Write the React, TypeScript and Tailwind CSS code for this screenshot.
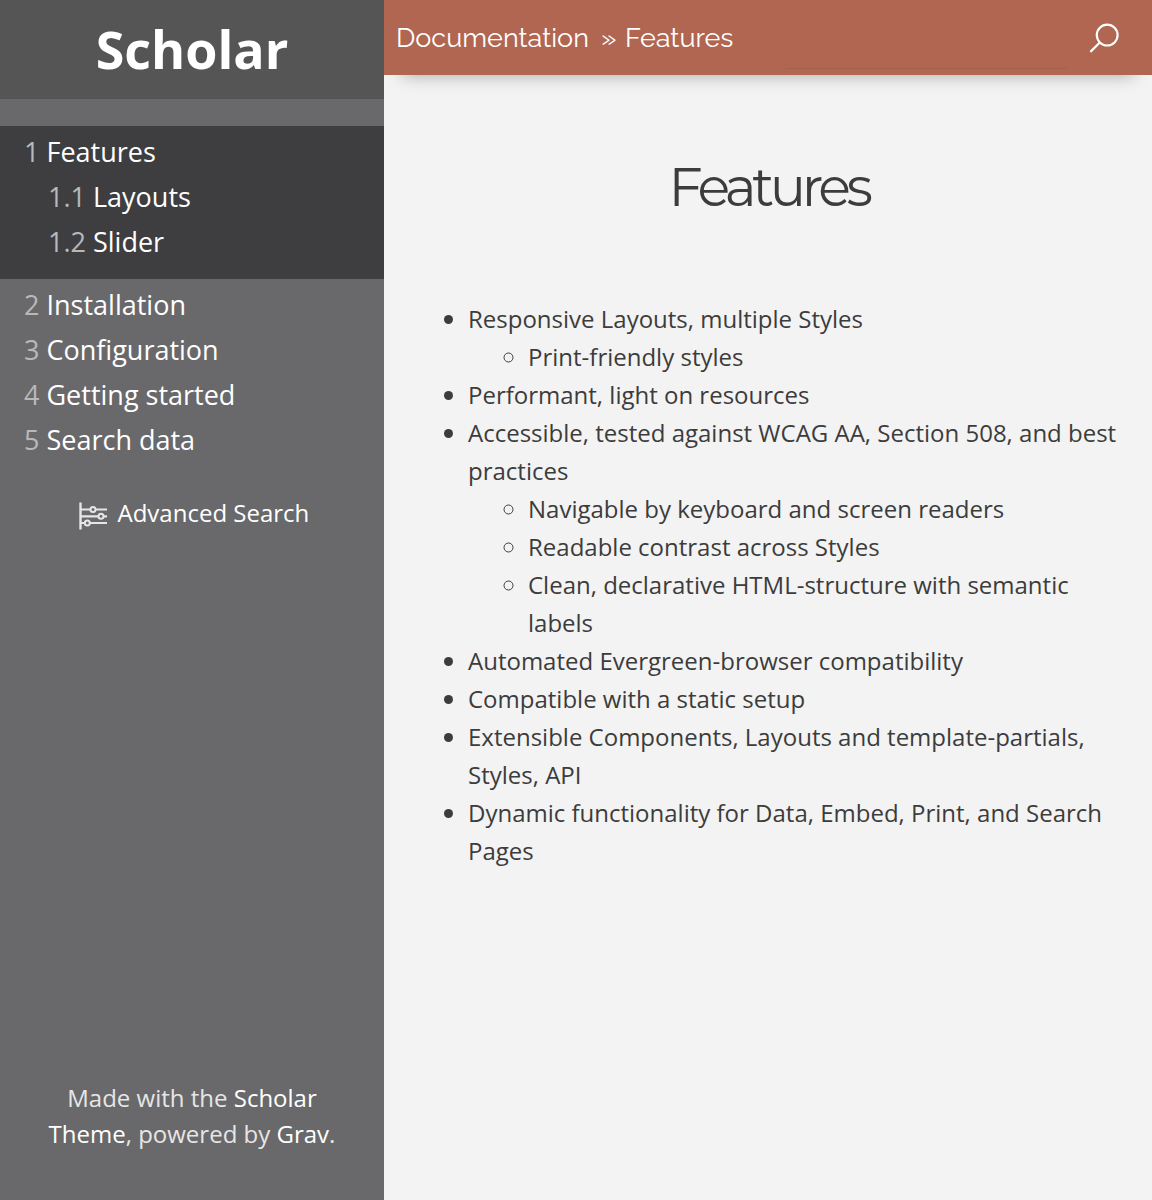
import React from "react";

const pages = [
  { n: "2", label: "Installation" },
  { n: "3", label: "Configuration" },
  { n: "4", label: "Getting started" },
  { n: "5", label: "Search data" },
];

function NavItem({ n, label, nested = false }: { n: string; label: string; nested?: boolean }) {
  return (
    <li className={nested ? "h-[45px] pl-12" : "h-[45px] pl-6"}>
      <a className="block whitespace-pre text-[27px] leading-[51px] text-white">
        <span className="text-[#b8b8b8]">{n}</span> {label}
      </a>
    </li>
  );
}

function FiltersIcon() {
  return (
    <svg className="h-7 w-7 shrink-0" viewBox="0 0 28 28" fill="none" stroke="#e6e6e6" strokeWidth="2">
      <path d="M1.5 0.5v27" strokeWidth="2.4" />
      <path d="M2 7.5h9.5M16.5 7.5h11.5M2 14.3h17.5M24.5 14.3h3.5M2 21h3.8M10.8 21h17.2" strokeWidth="2.2" />
      <circle cx="14" cy="7.5" r="2.5" />
      <circle cx="22" cy="14.3" r="2.5" />
      <circle cx="8.3" cy="21" r="2.5" />
    </svg>
  );
}

function SearchIcon() {
  return (
    <svg className="h-[30px] w-[30px]" viewBox="0 0 30 30" fill="none" stroke="#fff" strokeWidth="2.2">
      <circle cx="18.2" cy="12.1" r="10.4" />
      <path d="M10.8 19.5L1.4 28.9" />
    </svg>
  );
}

export default function App() {
  return (
    <div className="flex h-[1200px] w-[1152px] overflow-hidden bg-[#f3f3f3] font-['Open_Sans',sans-serif]">
      <aside className="flex w-96 shrink-0 flex-col bg-[#69696b]">
        <div className="h-[99px] bg-[#555555] text-center text-[52px] font-bold leading-[98px] text-white">
          Scholar
        </div>
        <nav className="mt-[27px]">
          <ul>
            <li className="h-[153px] bg-[#3e3e40]">
              <ul>
                <NavItem n="1" label="Features" />
                <NavItem n="1.1" label="Layouts" nested />
                <NavItem n="1.2" label="Slider" nested />
              </ul>
            </li>
            {pages.map((p) => (
              <NavItem key={p.n} n={p.n} label={p.label} />
            ))}
          </ul>
        </nav>
        <a className="mt-9 flex h-9 items-center pl-[79px] text-[24px] leading-9 text-white">
          <span className="mt-[5px]"><FiltersIcon /></span>
          <span className="ml-[10.5px]">Advanced Search</span>
        </a>
        <footer className="mb-12 mt-auto text-center text-[24px] leading-9 text-[#e6e6e6]">
          Made with the <span className="text-white">Scholar<br />Theme</span>, powered by{" "}
          <span className="text-white">Grav</span>.
        </footer>
      </aside>
      <main className="flex-1">
        <header className="flex h-[75px] items-center bg-[#b06651] pl-3 shadow-[0_18px_18px_-18px_rgba(0,0,0,0.32)]">
          <div className="mt-0.5 flex items-baseline font-['Raleway',sans-serif] text-[27px] text-white">
            <span>Documentation</span>
            <span className="ml-3">»</span>
            <span className="ml-[8.5px]">Features</span>
          </div>
          <div className="ml-auto mt-[62px] h-px w-[282px] bg-[#a8604c]" />
          <div className="ml-[21px] mr-[33px]">
            <SearchIcon />
          </div>
        </header>
        <h1 className="mt-[72px] pl-px text-center font-['Montserrat',sans-serif] text-[54px] font-normal leading-[80px] tracking-[-4.4px] text-[#3c3c3c]">
          Features
        </h1>
        <ul className="mt-[73px] list-disc pl-[84px] pr-6 text-[24px] leading-[38px] text-[#3c3c3c]">
          <li>
            Responsive Layouts, multiple Styles
            <ul className="list-[circle] pl-[60px]">
              <li>Print-friendly styles</li>
            </ul>
          </li>
          <li>Performant, light on resources</li>
          <li>
            Accessible, tested against WCAG AA, Section 508, and best<br />practices
            <ul className="list-[circle] pl-[60px]">
              <li>Navigable by keyboard and screen readers</li>
              <li>Readable contrast across Styles</li>
              <li>Clean, declarative HTML-structure with semantic<br />labels</li>
            </ul>
          </li>
          <li>Automated Evergreen-browser compatibility</li>
          <li>Compatible with a static setup</li>
          <li>Extensible Components, Layouts and template-partials,<br />Styles, API</li>
          <li>Dynamic functionality for Data, Embed, Print, and Search<br />Pages</li>
        </ul>
      </main>
    </div>
  );
}
